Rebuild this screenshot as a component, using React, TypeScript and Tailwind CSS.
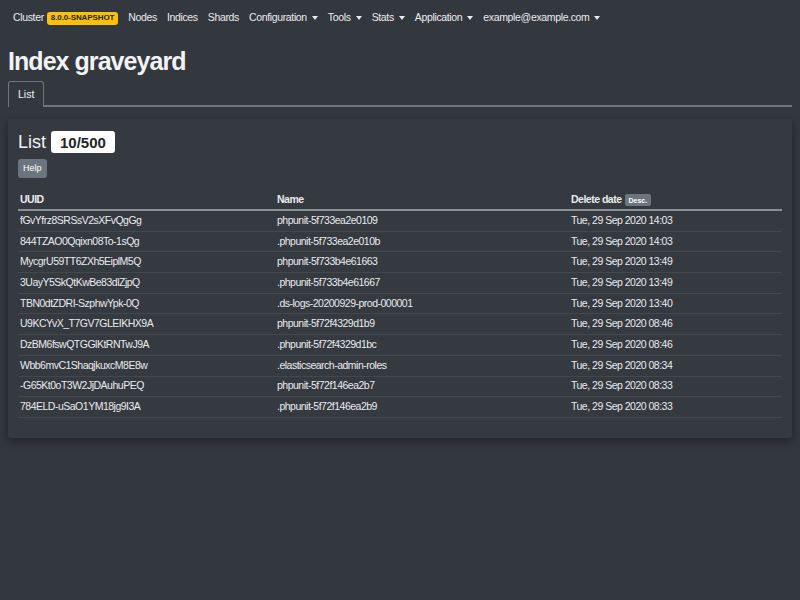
import * as React from "react";

const rows = [
  ["fGvYfrz8SRSsV2sXFvQgGg", "phpunit-5f733ea2e0109", "Tue, 29 Sep 2020 14:03"],
  ["844TZAO0Qqixn08To-1sQg", ".phpunit-5f733ea2e010b", "Tue, 29 Sep 2020 14:03"],
  ["MycgrU59TT6ZXh5EiplM5Q", "phpunit-5f733b4e61663", "Tue, 29 Sep 2020 13:49"],
  ["3UayY5SkQtKwBe83dlZjpQ", ".phpunit-5f733b4e61667", "Tue, 29 Sep 2020 13:49"],
  ["TBN0dtZDRI-SzphwYpk-0Q", ".ds-logs-20200929-prod-000001", "Tue, 29 Sep 2020 13:40"],
  ["U9KCYvX_T7GV7GLEIKHX9A", "phpunit-5f72f4329d1b9", "Tue, 29 Sep 2020 08:46"],
  ["DzBM6fswQTGGlKtRNTwJ9A", ".phpunit-5f72f4329d1bc", "Tue, 29 Sep 2020 08:46"],
  ["Wbb6mvC1ShaqjkuxcM8E8w", ".elasticsearch-admin-roles", "Tue, 29 Sep 2020 08:34"],
  ["-G65Kt0oT3W2JjDAuhuPEQ", "phpunit-5f72f146ea2b7", "Tue, 29 Sep 2020 08:33"],
  ["784ELD-uSaO1YM18jg9I3A", ".phpunit-5f72f146ea2b9", "Tue, 29 Sep 2020 08:33"],
];

function Caret() {
  return <span className="ml-[5px] inline-block w-0 h-0 border-l-[3px] border-r-[3px] border-t-[4px] border-l-transparent border-r-transparent border-t-[#e9ecef] align-middle" />;
}

export default function App() {
  const navItems: [string, boolean][] = [
    ["Nodes", false],
    ["Indices", false],
    ["Shards", false],
    ["Configuration", true],
    ["Tools", true],
    ["Stats", true],
    ["Application", true],
    ["example@example.com", true],
  ];

  return (
    <div
      className="min-h-[600px] bg-[#33373e] text-[#f1f3f5]"
      style={{ fontFamily: "'Liberation Sans', Arial, sans-serif" }}
    >
      <nav className="flex items-center h-[36px] px-[13px] text-[10.5px] tracking-[-0.35px] text-[#e9ecef]">
        <span>Cluster</span>
        <span className="ml-[3px] bg-[#ffc107] text-[#212529] text-[8px] tracking-[-0.1px] font-bold rounded-[3px] px-[4px] py-[2.5px] leading-none">
          8.0.0-SNAPSHOT
        </span>
        <div className="flex items-center gap-[10px] ml-[10px]">
          {navItems.map(([label, dd]) => (
            <span key={label} className="flex items-center">
              {label}
              {dd && <Caret />}
            </span>
          ))}
        </div>
      </nav>

      <div className="px-[8px]">
        <h1 className="text-[25px] font-bold leading-none mt-[13px] mb-[7px] tracking-[-0.95px]">Index graveyard</h1>

        <div className="flex border-b-2 border-[#6c757d]">
          <div className="border border-b-0 border-[#6c757d] rounded-t-[3px] px-[9px] h-[26px] flex items-center text-[10.5px] -mb-[2px] bg-[#33373e]">
            List
          </div>
        </div>

        <div className="mt-[12px] bg-[#353940] rounded-[3px] shadow-[0_4px_10px_rgba(0,0,0,0.35)] px-[10px] pt-[12px] pb-[20px]">
          <div className="flex items-center">
            <h2 className="text-[18px] font-medium leading-none">List</h2>
            <span className="ml-[5px] bg-white text-[#212529] font-bold text-[15px] rounded-[3px] px-[9px] h-[22px] flex items-center leading-none">
              10/500
            </span>
          </div>
          <button className="mt-[6px] bg-[#6c757d] text-white text-[9px] rounded-[3px] px-[5px] h-[19px] leading-none">
            Help
          </button>

          <div className="mt-[13px] text-[10.5px] tracking-[-0.5px]">
            <div className="grid grid-cols-[257px_294px_1fr] items-center h-[20px] border-b-2 border-[#8a9096] font-bold text-[#e9ecef]">
              <div className="px-[2px]">UUID</div>
              <div className="px-[2px]">Name</div>
              <div className="px-[2px] flex items-center">
                Delete date
                <span className="ml-[3px] bg-[#6c757d] text-white text-[7px] tracking-normal rounded-[2px] px-[4px] py-[2.5px] leading-none">
                  Desc.
                </span>
              </div>
            </div>
            {rows.map((r) => (
              <div
                key={r[0]}
                className="grid grid-cols-[257px_294px_1fr] items-center h-[20.7px] border-b border-[#43484f] text-[#e9ecef]"
              >
                <div className="px-[2px]">{r[0]}</div>
                <div className="px-[2px]">{r[1]}</div>
                <div className="px-[2px]">{r[2]}</div>
              </div>
            ))}
          </div>
        </div>
      </div>
    </div>
  );
}
